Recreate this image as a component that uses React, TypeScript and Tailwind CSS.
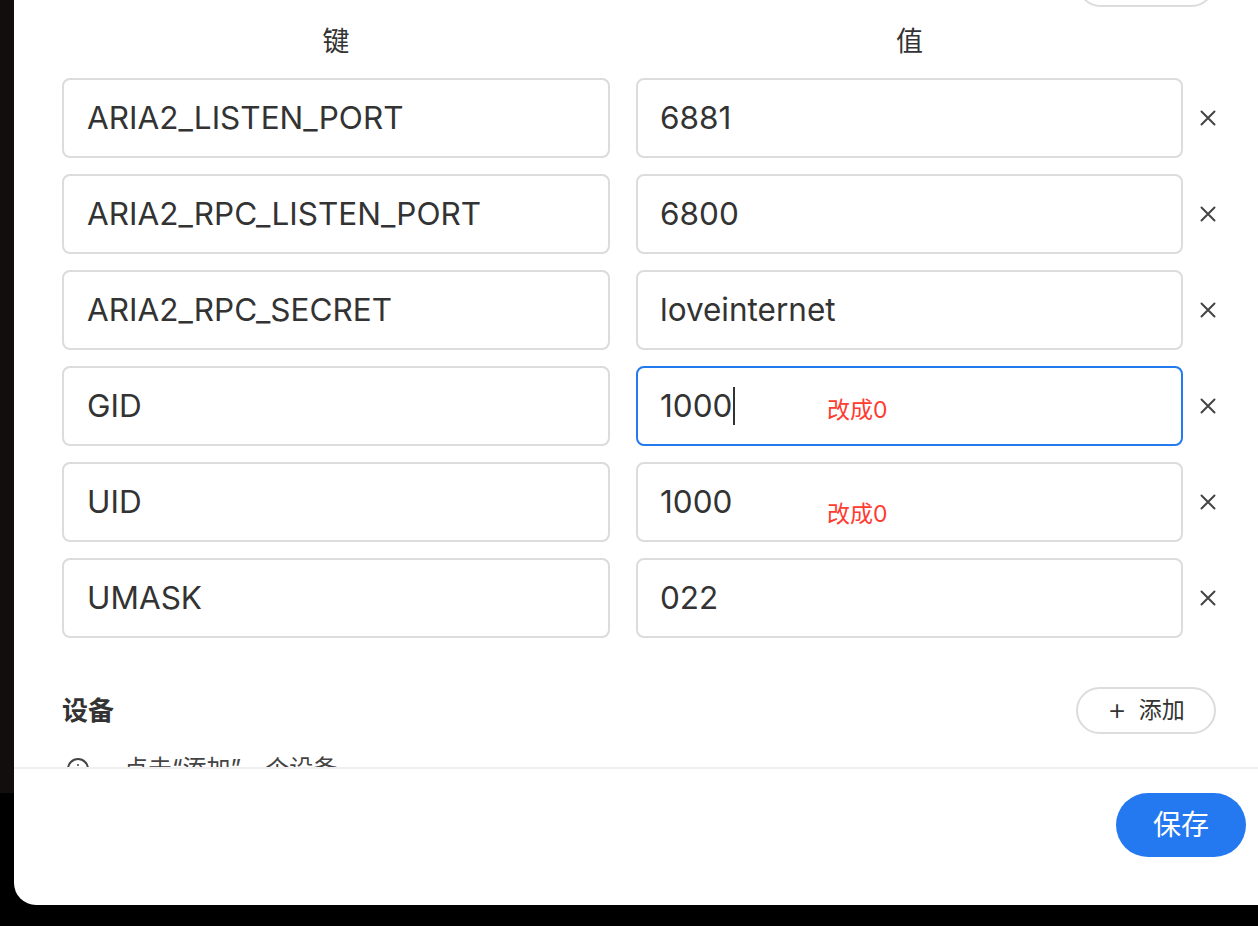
import { Info } from 'lucide-react';

const rows = [
  { key: 'ARIA2_LISTEN_PORT', value: '6881' },
  { key: 'ARIA2_RPC_LISTEN_PORT', value: '6800' },
  { key: 'ARIA2_RPC_SECRET', value: 'loveinternet' },
  { key: 'GID', value: '1000', focused: true, note: 'top-[31px]' },
  { key: 'UID', value: '1000', note: 'top-[39px]' },
  { key: 'UMASK', value: '022' },
];

function CloseIcon() {
  return (
    <svg width="16" height="16" viewBox="0 0 16 16" fill="none" stroke="#444" strokeWidth="2" strokeLinecap="round">
      <path d="M1.5 1.5 L14.5 14.5 M14.5 1.5 L1.5 14.5" />
    </svg>
  );
}

function App() {
  return (
    <div
      className="w-[1258px] h-[926px] bg-black flex overflow-hidden text-[#333]"
      style={{ fontFamily: 'Inter, "Noto Sans CJK SC", sans-serif' }}
    >
      <div className="w-[14px] shrink-0 flex flex-col">
        <div className="h-[793px] bg-[#120e0d]" />
      </div>

      <div className="w-[1244px] h-[905px] bg-white rounded-bl-[22px] flex flex-col">
        {/* scroll area */}
        <div className="h-[767px] overflow-hidden">
          <div className="ml-[48px] w-[1154px]">
            <div className="flex justify-end -mt-[40px] pr-[1px]">
              <div className="w-[138px] h-[47px] rounded-full border-2 border-[#dcdcdc]" />
            </div>

            <div className="mt-[7px] h-[56px] grid grid-cols-[548px_547px] gap-x-[26px] items-center text-[27px]">
              <div className="text-center">键</div>
              <div className="text-center">值</div>
            </div>

            <div className="mt-[8px] flex flex-col gap-[16px]">
              {rows.map((r) => (
                <div key={r.key} className="flex items-center">
                  <div className="w-[548px] h-[80px] rounded-[8px] border-2 border-[#dcdcdc] flex items-center pl-[23px] text-[31.5px]">
                    {r.key}
                  </div>
                  <div
                    className={
                      r.focused
                        ? 'relative ml-[26px] w-[547px] h-[80px] rounded-[8px] border-2 border-[#2379ee] flex items-center pl-[22px] text-[31.5px]'
                        : 'relative ml-[26px] w-[547px] h-[80px] rounded-[8px] border-2 border-[#dcdcdc] flex items-center pl-[22px] text-[31.5px]'
                    }
                  >
                    {r.value}
                    {r.focused && <span className="ml-[1px] w-[2px] h-[38px] bg-[#333]" />}
                    {r.note && (
                      <span className={'absolute left-[189px] text-[23px] leading-none text-[#ff3b30] ' + r.note}>
                        改成0
                      </span>
                    )}
                  </div>
                  <div className="flex-1 flex justify-end">
                    <CloseIcon />
                  </div>
                </div>
              ))}
            </div>

            <div className="mt-[49px] h-[47px] flex items-center justify-between">
              <div className="text-[26px] font-bold">设备</div>
              <button className="w-[140px] h-[47px] rounded-full border-2 border-[#dcdcdc] flex items-center justify-center gap-[12px] text-[23px] text-[#333]">
                <span className="text-[30px] font-light leading-none -mt-[3px]">+</span>
                <span>添加</span>
              </button>
            </div>

            <div className="mt-[17px] flex items-center gap-[34px] text-[24px] text-[#444]">
              <Info size={24} className="ml-[4px]" />
              <span>点击“添加”一个设备</span>
            </div>
          </div>
        </div>

        <div className="border-t-2 border-[#efefef] flex-1 flex justify-end items-start pt-[24px] pr-[12px]">
          <button className="w-[130px] h-[64px] rounded-full bg-[#2479f0] text-white text-[28px]">保存</button>
        </div>
      </div>
    </div>
  );
}

export default App;
